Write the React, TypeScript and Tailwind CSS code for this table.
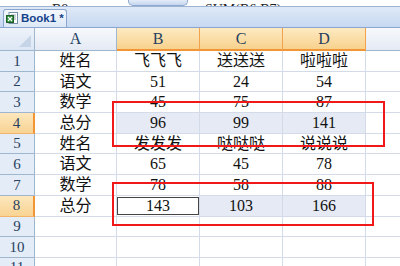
import React from "react";

const rows: string[][] = [
  ["姓名", "飞飞飞", "送送送", "啦啦啦"],
  ["语文", "51", "24", "54"],
  ["数学", "45", "75", "87"],
  ["总分", "96", "99", "141"],
  ["姓名", "发发发", "哒哒哒", "说说说"],
  ["语文", "65", "45", "78"],
  ["数学", "78", "58", "88"],
  ["总分", "143", "103", "166"],
  ["", "", "", ""],
  ["", "", "", ""],
  ["", "", "", ""],
];

const selectedRows = [4, 8];
const font = { fontFamily: '"Liberation Serif", "Noto Sans CJK SC", serif' };

function ExcelIcon() {
  return (
    <svg width="12" height="13" viewBox="0 0 12 13">
      <rect x="3" y="0.5" width="8.5" height="11" fill="#fff" stroke="#7a8fa8" />
      <line x1="5" y1="3" x2="10" y2="3" stroke="#9ab" />
      <line x1="5" y1="5" x2="10" y2="5" stroke="#9ab" />
      <line x1="5" y1="7" x2="10" y2="7" stroke="#9ab" />
      <rect x="0.5" y="3.5" width="7" height="7" fill="#2f8a3b" stroke="#1f5e28" />
      <path d="M2 5l4 4M6 5l-4 4" stroke="#fff" strokeWidth="1.2" />
    </svg>
  );
}

export default function App() {
  return (
    <div className="relative w-[400px] h-[266px] overflow-hidden bg-white select-none" style={font}>
      {/* formula bar, cut off at top */}
      <div className="flex h-[7px] items-end overflow-hidden border-b border-[#9db3d3] bg-white text-[14px] leading-none text-[#222]">
        <span className="ml-[52px] mb-[-11px] w-[68px] whitespace-nowrap">B8</span>
        <div className="ml-[8px] h-[7px] w-[60px] rounded-b-[5px] border border-t-0 border-[#8ea9cf] bg-gradient-to-b from-[#e9f0fa] to-[#c5d6ee]" />
        <span className="ml-[9px] mb-[-11px] whitespace-nowrap">=SUM(B6:B7)</span>
      </div>

      {/* sheet tab bar */}
      <div className="flex h-[21px] items-end border-b border-[#8ba6cf] bg-gradient-to-b from-[#dfe9f7] to-[#c6d8f1] pl-[3px]">
        <div className="flex h-[18px] w-[64px] items-center gap-[3px] rounded-t-[3px] border border-b-0 border-[#8ba6cf] bg-gradient-to-b from-[#f4f8fd] to-[#dde8f6] pl-[2px]">
          <ExcelIcon />
          <span
            className="whitespace-nowrap text-[11.5px] font-bold leading-none text-[#15428b]"
            style={{ fontFamily: '"Liberation Sans", Arial, sans-serif' }}
          >
            Book1 *
          </span>
        </div>
      </div>

      {/* grid */}
      <div className="grid grid-cols-[35px_82px_83px_83px_83px_1fr]">
        {/* header row */}
        <div className="flex h-[23px] items-end justify-end border-r border-b border-[#9eb6ce] bg-gradient-to-b from-[#eef3fa] to-[#dce6f4] pr-[3px] pb-[3px]">
          <svg width="12" height="12" viewBox="0 0 12 12">
            <path d="M12 0V12H0Z" fill="#c6d4e8" />
          </svg>
        </div>
        <div className="flex h-[23px] items-center justify-center border-r border-b border-[#9eb6ce] bg-gradient-to-b from-[#f7f9fc] to-[#e4eaf4] text-[16px] text-[#27415f]">
          A
        </div>
        {["B", "C", "D"].map((c) => (
          <div
            key={c}
            className="flex h-[23px] items-center justify-center border-r border-b-2 border-r-[#f2a24c] border-b-[#f29536] bg-gradient-to-b from-[#fde9c2] to-[#f8d28c] text-[16px] text-[#27415f]"
          >
            {c}
          </div>
        ))}
        <div className="h-[23px] border-b border-[#9eb6ce] bg-gradient-to-b from-[#f7f9fc] to-[#e4eaf4]" />

        {rows.map((r, i) => {
          const n = i + 1;
          const sel = selectedRows.includes(n);
          return (
            <React.Fragment key={n}>
              <div
                className={
                  sel
                    ? "flex h-[20.7px] items-center justify-center border-r-2 border-b border-r-[#f29536] border-b-[#f2b46a] bg-gradient-to-b from-[#fde7bd] to-[#f8d393] text-[15px] text-[#27415f]"
                    : "flex h-[20.7px] items-center justify-center border-r border-b border-[#9eb6ce] bg-[#e4ecf7] text-[15px] text-[#27415f]"
                }
              >
                {n}
              </div>
              {r.map((v, j) => {
                const active = n === 8 && j === 1;
                const hl = sel && j > 0 && !active;
                return (
                  <div
                    key={j}
                    className={
                      "flex h-[20.7px] items-center justify-center border-r border-b border-[#d4dbe8] text-[16px] text-[#111] " +
                      (hl ? "bg-[#e6eaf4]" : "bg-white")
                    }
                  >
                    {active ? (
                      <div className="flex h-[18px] w-[82px] items-center justify-center border border-[#444]">
                        {v}
                      </div>
                    ) : (
                      v
                    )}
                  </div>
                );
              })}
              <div className="h-[20.7px] border-b border-[#d4dbe8] bg-white" />
            </React.Fragment>
          );
        })}
      </div>

      {/* red annotation boxes */}
      <div className="absolute left-[112px] top-[101px] h-[46px] w-[273px] border-2 border-[#f01818]" />
      <div className="absolute left-[112px] top-[182px] h-[44px] w-[262px] border-2 border-[#f01818]" />
    </div>
  );
}
